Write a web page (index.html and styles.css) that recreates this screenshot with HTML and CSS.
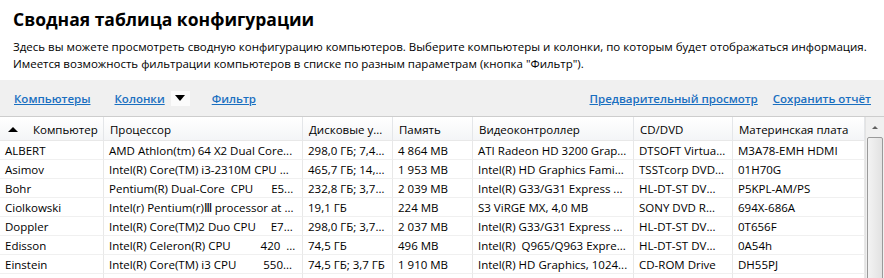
FILE: index.html
```html
<!DOCTYPE html>
<html>
<head>
    <title>Сводная таблица конфигурации</title>
    <link rel="stylesheet" href="styles.css">
</head>
<body>
    <div class="intro">
        <h1>Сводная таблица конфигурации</h1>
        <p>Здесь вы можете просмотреть сводную конфигурацию компьютеров. Выберите компьютеры и колонки, по которым будет отображаться информация.<br>
        Имеется возможность фильтрации компьютеров в списке по разным параметрам (кнопка "Фильтр").</p>
    </div>

    <div class="toolbar">
        <div class="toolbar-left">
            <a href="#">Компьютеры</a>
            <span class="columns">
                <a href="#">Колонки</a>
                <span class="drop"><span class="tri-down"></span></span>
            </span>
            <a href="#">Фильтр</a>
        </div>
        <div class="toolbar-right">
            <a href="#">Предварительный просмотр</a>
            <a href="#">Сохранить отчёт</a>
        </div>
    </div>

    <div class="grid-wrap">
        <table class="grid">
            <colgroup>
                <col style="width:104px">
                <col style="width:199px">
                <col style="width:90px">
                <col style="width:80px">
                <col style="width:161px">
                <col style="width:99px">
                <col style="width:132px">
            </colgroup>
            <thead>
                <tr>
                    <th class="sorted"><span class="tri-up"></span>Компьютер</th>
                    <th>Процессор</th>
                    <th>Дисковые у...</th>
                    <th>Память</th>
                    <th>Видеоконтроллер</th>
                    <th>CD/DVD</th>
                    <th>Материнская плата</th>
                </tr>
            </thead>
            <tbody>
                <tr>
                    <td>ALBERT</td>
                    <td>AMD Athlon(tm) 64 X2 Dual Core...</td>
                    <td>298,0 ГБ; 7,4 ...</td>
                    <td>4 864 MB</td>
                    <td>ATI Radeon HD 3200 Grap...</td>
                    <td>DTSOFT Virtua...</td>
                    <td>M3A78-EMH HDMI</td>
                </tr>
                <tr>
                    <td>Asimov</td>
                    <td>Intel(R) Core(TM) i3-2310M CPU ...</td>
                    <td>465,7 ГБ; 14,...</td>
                    <td>1 953 MB</td>
                    <td>Intel(R) HD Graphics Fami...</td>
                    <td>TSSTcorp DVD...</td>
                    <td>01H70G</td>
                </tr>
                <tr>
                    <td>Bohr</td>
                    <td>Pentium(R) Dual-Core  CPU      E5...</td>
                    <td>232,8 ГБ; 3,7 ...</td>
                    <td>2 039 MB</td>
                    <td>Intel(R) G33/G31 Express ...</td>
                    <td>HL-DT-ST DV...</td>
                    <td>P5KPL-AM/PS</td>
                </tr>
                <tr>
                    <td>Ciolkowski</td>
                    <td>Intel(r) Pentium(r)Ⅲ processor at ...</td>
                    <td>19,1 ГБ</td>
                    <td>224 MB</td>
                    <td>S3 ViRGE MX, 4,0 MB</td>
                    <td>SONY DVD R...</td>
                    <td>694X-686A</td>
                </tr>
                <tr>
                    <td>Doppler</td>
                    <td>Intel(R) Core(TM)2 Duo CPU     E7...</td>
                    <td>298,0 ГБ; 3,7 ...</td>
                    <td>2 037 MB</td>
                    <td>Intel(R) G33/G31 Express ...</td>
                    <td>HL-DT-ST DV...</td>
                    <td>0T656F</td>
                </tr>
                <tr>
                    <td>Edisson</td>
                    <td>Intel(R) Celeron(R) CPU          420  ...</td>
                    <td>74,5 ГБ</td>
                    <td>496 MB</td>
                    <td>Intel(R)  Q965/Q963 Expre...</td>
                    <td>HL-DT-ST DV...</td>
                    <td>0A54h</td>
                </tr>
                <tr>
                    <td>Einstein</td>
                    <td>Intel(R) Core(TM) i3 CPU         550...</td>
                    <td>74,5 ГБ; 3,7 ГБ</td>
                    <td>1 910 MB</td>
                    <td>Intel(R) HD Graphics, 1024...</td>
                    <td>CD-ROM Drive</td>
                    <td>DH55PJ</td>
                </tr>
                <tr>
                    <td></td><td></td><td></td><td></td><td></td><td></td><td></td>
                </tr>
            </tbody>
        </table>
        <div class="scrollbar">
            <div class="scroll-btn"><span class="tri-small"></span></div>
            <div class="scroll-thumb"></div>
        </div>
    </div>
</body>
</html>
```

FILE: styles.css
```css
body {
    margin: 0;
    font-family: "Open Sans", "Noto Sans", sans-serif;
    font-size: 11.5px;
    color: #000;
    background: #fff;
    overflow: hidden;
}
.intro {
    padding: 8px 13px 0;
}
h1 {
    margin: 0;
    font-size: 17.5px;
    line-height: 22px;
    font-weight: bold;
}
.intro p {
    margin: 8px 0 0;
    line-height: 17px;
    white-space: nowrap;
}
.toolbar {
    margin-top: 8px;
    height: 36px;
    background: #f0f0f0;
    border-bottom: 1px solid #cdcdcd;
    display: flex;
    justify-content: space-between;
    align-items: center;
    padding: 0 13px 0 14px;
}
.toolbar a {
    color: #1a6fc0;
    font-weight: 600;
    text-decoration: underline;
}
.toolbar-left {
    display: flex;
    align-items: center;
    gap: 22px;
}
.toolbar-right {
    display: flex;
    gap: 15px;
}
.columns {
    display: flex;
    align-items: center;
    gap: 6px;
    margin-left: 2px;
}
.drop {
    width: 19px;
    height: 15px;
    background: #fbfbfb;
    display: flex;
    align-items: center;
    justify-content: center;
}
.tri-down {
    width: 0;
    height: 0;
    border-left: 5px solid transparent;
    border-right: 5px solid transparent;
    border-top: 6px solid #000;
}
.grid-wrap {
    display: flex;
    align-items: flex-start;
}
.grid {
    width: 865px;
    table-layout: fixed;
    border-collapse: separate;
    border-spacing: 0;
}
.grid thead tr {
    height: 24px;
}
.grid th {
    padding: 2px 6px 0;
    line-height: 16px;
    text-align: left;
    font-weight: normal;
    background: linear-gradient(#ffffff, #f4f5f7);
    border-right: 1px solid #e4e6e9;
    border-bottom: 1px solid #e8e8e8;
    white-space: nowrap;
    overflow: hidden;
}
.grid th.sorted {
    padding-left: 8px;
}
.tri-up {
    display: inline-block;
    width: 0;
    height: 0;
    border-left: 5px solid transparent;
    border-right: 5px solid transparent;
    border-bottom: 5px solid #000;
    margin-right: 15px;
    vertical-align: 2px;
}
.grid tbody tr {
    height: 19px;
}
.grid td {
    padding: 2px 5px 0;
    line-height: 16px;
    white-space: pre;
    overflow: hidden;
    text-overflow: ellipsis;
    border-right: 1px solid #e8e8e8;
    border-bottom: 1px solid #f0f0f0;
}
.scrollbar {
    width: 19px;
    height: 170px;
    flex: none;
    background: #f0f0f0;
    border-left: 1px solid #e3e3e3;
    box-sizing: border-box;
}
.scroll-btn {
    height: 20px;
    display: flex;
    align-items: center;
    justify-content: center;
}
.tri-small {
    width: 0;
    height: 0;
    border-left: 3px solid transparent;
    border-right: 3px solid transparent;
    border-bottom: 3px solid #606060;
}
.scroll-thumb {
    margin: 0 1px;
    height: 160px;
    border: 1px solid #9a9a9a;
    border-radius: 2px;
    background: linear-gradient(to right, #f3f3f3, #e2e2e2);
}
```
